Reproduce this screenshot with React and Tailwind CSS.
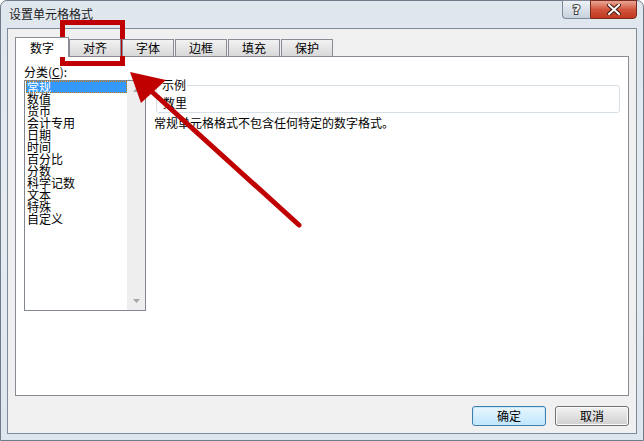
import React from 'react';

const categories = ['常规', '数值', '货币', '会计专用', '日期', '时间', '百分比', '分数', '科学记数', '文本', '特殊', '自定义'];
const tabs = ['对齐', '字体', '边框', '填充', '保护'];

const cjk = { fontFamily: '"Noto Sans CJK SC", "Liberation Sans", sans-serif' };

const App = () => {
  return (
    <div className="relative w-[644px] h-[441px] overflow-hidden bg-white" style={cjk}>
      <div className="w-[644px] h-[441px] flex flex-col rounded-t-[7px] border border-[#6f7b88] bg-gradient-to-b from-[#dfe6ee] via-[#e6ecf2] to-[#dde5ee]">
        {/* Title bar */}
        <div className="h-[27px] flex justify-between">
          <div className="pl-[8px] pt-[6px] text-[12px] leading-[14px] text-[#1b1b1b]">设置单元格格式</div>
          <div className="flex mr-[6px] -mt-px">
            <div className="w-[28px] h-[19px] flex items-center justify-center border border-[#7e8a98] border-r-0 rounded-bl-[4px] bg-gradient-to-b from-[#eef2f6] to-[#c6d0dc]">
              <span className="text-[13px] font-bold leading-none text-white [-webkit-text-stroke:2px_#3c3c3c] [paint-order:stroke_fill]" style={{ fontFamily: '"DejaVu Sans", sans-serif' }}>?</span>
            </div>
            <div className="w-[47px] h-[19px] flex items-center justify-center border border-[#7a2a1c] rounded-br-[4px] bg-gradient-to-b from-[#e8a595] via-[#d2543c] to-[#c2381f]">
              <svg width="14" height="11" viewBox="0 0 14 11">
                <path d="M2 1 L12 10 M12 1 L2 10" stroke="#3b1a14" strokeWidth="4" strokeLinecap="square" />
                <path d="M2 1 L12 10 M12 1 L2 10" stroke="#ffffff" strokeWidth="2" strokeLinecap="square" />
              </svg>
            </div>
          </div>
        </div>

        {/* Client area */}
        <div className="mx-[6px] h-[406px] border border-[#7f8b98] bg-[#f0f0f0] flex flex-col pt-[8px] px-[7px]">
          {/* Tabs */}
          <div className="flex items-end h-[20px] relative z-10">
            <div className="w-[54px] h-[20px] border border-b-0 border-[#898c95] bg-white flex items-center justify-center text-[12px] text-black">数字</div>
            {tabs.map((t, i) => (
              <div
                key={t}
                className={`w-[52px] h-[17px] mb-px border border-b-0 border-[#898c95] bg-gradient-to-b from-[#f2f2f2] to-[#d8d8d8] flex items-center justify-center text-[12px] text-black ${i === 0 ? 'ml-0' : 'ml-[1px]'}`}
              >
                {t}
              </div>
            ))}
          </div>

          {/* Panel */}
          <div className="-mt-px h-[340px] border border-[#898c95] bg-white pl-[8px] pr-[8px] pt-[8px]">
            <div className="text-[12px] leading-[14px] text-black">
              分类(<span className="underline">C</span>):
            </div>
            <div className="flex mt-[1px]">
              <div className="w-[122px] h-[231px] border border-[#828790] bg-white flex">
                <div className="w-[102px] flex flex-col pl-px">
                  {categories.map((c, i) => (
                    <div
                      key={c}
                      className={`h-[12px] leading-[12px] text-[12px] pl-[1px] whitespace-nowrap ${i === 0 ? 'bg-[#3399ff] text-white outline-1 outline-dotted outline-[#c87a00] -outline-offset-1' : 'text-black'}`}
                    >
                      {c}
                    </div>
                  ))}
                </div>
                <div className="w-[18px] bg-[#eeeeee] flex flex-col justify-between items-center py-[7px]">
                  <svg width="7" height="4" viewBox="0 0 7 4"><path d="M3.5 0 L7 4 L0 4 Z" fill="#a7a7a7" /></svg>
                  <svg width="7" height="4" viewBox="0 0 7 4"><path d="M0 0 L7 0 L3.5 4 Z" fill="#a7a7a7" /></svg>
                </div>
              </div>

              <div className="flex-1 ml-[8px] flex flex-col">
                <div className="relative mt-[5px] ml-[2px] h-[28px] border border-[#d5dfe5] rounded-[3px]">
                  <span className="absolute -top-[8px] left-[4px] bg-white px-[1px] text-[12px] leading-[14px] text-black">示例</span>
                  <div className="pl-[6px] pt-[10px] text-[12px] leading-[14px] text-black">数里</div>
                </div>
                <div className="mt-[3px] text-[12px] leading-[14px] text-black whitespace-nowrap">常规单元格格式不包含任何特定的数字格式。</div>
              </div>
            </div>
          </div>

          {/* Buttons */}
          <div className="flex justify-end gap-[9px] mt-[10px]">
            <button className="w-[74px] h-[20px] rounded-[3px] border border-[#3c7fb1] bg-gradient-to-b from-[#eaf6fd] to-[#bee6fd] shadow-[inset_0_0_0_1px_#c8e7fa] text-[12px] leading-none text-black">确定</button>
            <button className="w-[74px] h-[20px] rounded-[3px] border border-[#707070] bg-gradient-to-b from-[#f2f2f2] to-[#d0d0d0] shadow-[inset_0_0_0_1px_#fcfcfc] text-[12px] leading-none text-black">取消</button>
          </div>
        </div>
      </div>

      {/* Red annotation */}
      <svg className="absolute inset-0 pointer-events-none" width="644" height="441" viewBox="0 0 644 441">
        <rect x="62.5" y="22.5" width="60" height="41" fill="none" stroke="#c00000" strokeWidth="5" />
        <path d="M299 225 L150 90" stroke="#c00000" strokeWidth="5" strokeLinecap="round" />
        <path d="M130 72 L166 80 L141 103 Z" fill="#c00000" />
      </svg>
    </div>
  );
};

export default App;
